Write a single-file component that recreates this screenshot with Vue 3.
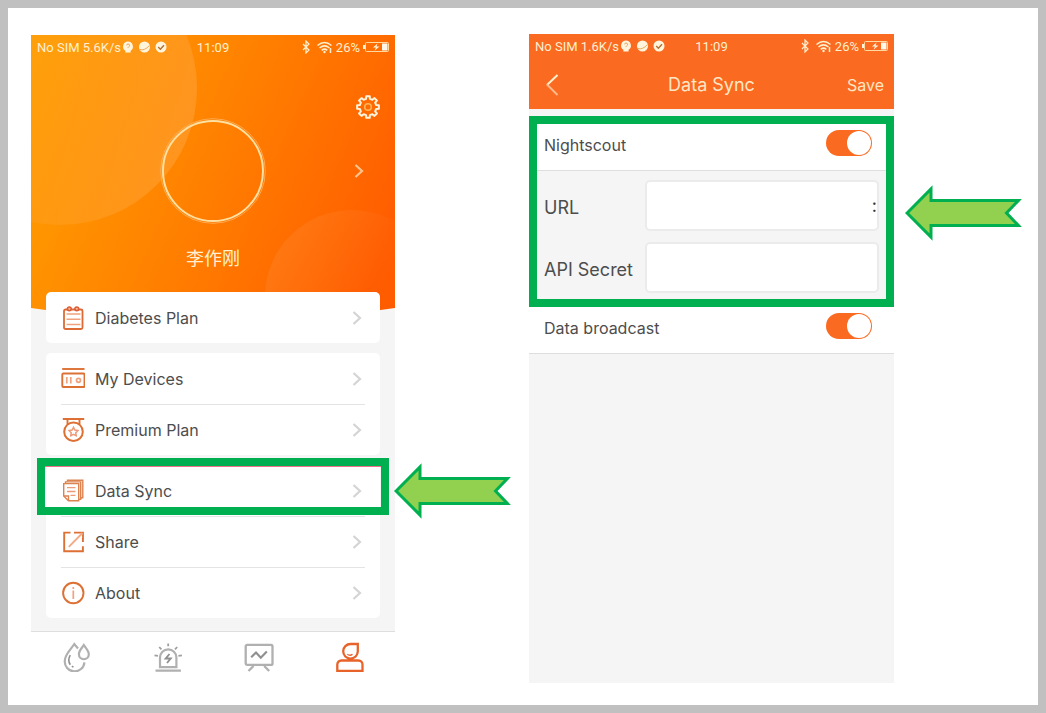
<script setup>
import { ref } from 'vue'

const nightscout = ref(true)
const broadcast = ref(true)
const url = ref(':')
const secret = ref('')

const groups = [
  [{ label: 'Diabetes Plan', icon: 'plan' }],
  [
    { label: 'My Devices', icon: 'devices' },
    { label: 'Premium Plan', icon: 'premium' },
  ],
  [
    { label: 'Data Sync', icon: 'sync', marked: true },
    { label: 'Share', icon: 'share' },
    { label: 'About', icon: 'about' },
  ],
]

const tabs = [
  { label: 'Glucose', icon: 'drops' },
  { label: 'Alarms', icon: 'alarm' },
  { label: 'Trends', icon: 'trend' },
  { label: 'Profile', icon: 'person', active: true },
]

const statuses = { profile: '5.6K/s', sync: '1.6K/s' }

function gearPath(teeth, outer, inner) {
  const step = (Math.PI * 2) / teeth
  const shape = [[-0.2, outer], [0.2, outer], [0.3, inner], [0.7, inner]]
  const points = []
  for (let i = 0; i < teeth; i++) {
    for (const [offset, radius] of shape) {
      const a = (i + offset) * step - Math.PI / 2
      points.push(`${(13 + radius * Math.cos(a)).toFixed(2)} ${(13 + radius * Math.sin(a)).toFixed(2)}`)
    }
  }
  return `M${points.join('L')}Z`
}
const gear = gearPath(8, 11, 8.4)
</script>

<template>
  <svg class="sprite" aria-hidden="true">
    <symbol id="s-badges" viewBox="0 0 46 12">
      <path d="M6 0.5a5 5 0 0 0-2.6 9.2V11.5h5.2V9.7A5 5 0 0 0 6 .5z" fill="#fff5dc" />
      <path d="M4.6 4.4a1.5 1.5 0 1 1 2 1.5q-.6.3-.6 1.2" fill="none" stroke="#e9a45c" />
      <circle cx="22.500" cy="6" r="5.500" fill="#fff5dc" />
      <path d="M18 8.500q4.500 1.500 9.500-4" fill="none" stroke="#f0a860" />
      <circle cx="39" cy="6" r="5.500" fill="#fff5dc" />
      <path d="M36.200 6l2.200 2.200 3.600-4" fill="none" stroke="#b56e35" stroke-width="1.400" />
    </symbol>
    <symbol id="s-signal" viewBox="0 0 32 14">
      <path d="M2 4l6 6-3 3V1l3 3-6 6" fill="none" stroke="#fff0cf" stroke-width="1.200" />
      <g fill="none" stroke="#fff0cf" stroke-width="1.500">
        <path d="M16.500 5.500q7-6 14 0M18.500 8q5-4.200 10 0M20.700 10.300q2.800-2.300 5.600 0" />
        <path d="M29.500 8v5" />
      </g>
      <circle cx="23.500" cy="12" r="1.200" fill="#fff0cf" />
    </symbol>
    <symbol id="s-battery" viewBox="0 0 26 12">
      <rect x="2.500" y="1.500" width="23" height="9" rx="1" fill="none" stroke="#ffd9a0" />
      <path d="M0 4h2v4H0z" fill="#fff5dc" />
      <path d="M19 2.500h5.500v7H19z" fill="#fff8e8" />
      <path d="M14.500 2.500L10 6.500h3l-1.500 3.200 5-4.200h-3z" fill="#fff5dc" />
    </symbol>

    <symbol id="i-plan" viewBox="0 0 24 24">
      <rect x="3" y="3.500" width="18.500" height="19.500" rx="1.500" fill="none" stroke="#dd6a35" stroke-width="1.800" />
      <path d="M5.500 8h14M5.500 13.200h14M5.500 18.600h14" stroke="#f0a27e" stroke-width="1.500" />
      <g fill="#f7b79a" stroke="#dd5a35" stroke-width="1.500">
        <circle cx="8.300" cy="2.800" r="1.900" /><circle cx="15.800" cy="2.800" r="1.900" />
      </g>
    </symbol>
    <symbol id="i-devices" viewBox="0 0 24 24">
      <path d="M1.200 2h22.300" stroke="#dd7034" stroke-width="1.900" />
      <rect x="1.300" y="6.500" width="22.200" height="13.500" rx="1" fill="none" stroke="#dd7034" stroke-width="1.900" />
      <path d="M5.800 10v6.500M9.800 10v6.500" stroke="#f0a27e" stroke-width="1.700" />
      <circle cx="17.500" cy="13.300" r="2" fill="none" stroke="#f0a27e" stroke-width="1.700" />
    </symbol>
    <symbol id="i-premium" viewBox="0 0 24 24">
      <path d="M1.800 1h21.400M6.500 1v5M18.500 1v5" fill="none" stroke="#dd7034" stroke-width="1.900" />
      <circle cx="12.500" cy="13.700" r="9.300" fill="none" stroke="#dd7034" stroke-width="2" />
      <path d="M12.500 9.300l1.400 2.700 3 .5-2.100 2.200.4 3-2.700-1.300-2.700 1.300.4-3-2.100-2.200 3-.5z" fill="none" stroke="#ec9a78" stroke-width="1.500" />
    </symbol>
    <symbol id="i-sync" viewBox="0 0 24 24">
      <g fill="none" stroke="#dc8350" stroke-width="1.400">
        <path d="M6.500 2.500V1.300h15.300v17.500H20" />
        <path d="M4.500 4.500V2.900h15.200v17.500H17.500" />
        <path d="M2.700 4.600h15v17.200H7.500l-4.800-4.800z" />
        <path d="M2.700 17h4.800v4.800" />
      </g>
      <path d="M6 8.700h8.500M6 12.500h8.500M9.500 16.300h5" stroke="#ec9a78" stroke-width="1.300" />
    </symbol>
    <symbol id="i-share" viewBox="0 0 24 24">
      <path d="M9.500 2.600H3.200v18.600h18.700v-5M21.900 12V8" fill="none" stroke="#dd7034" stroke-width="1.900" />
      <path d="M13 2.600h9v5.900" fill="none" stroke="#dd7034" stroke-width="1.800" />
      <path d="M7.800 16.800L21.500 3" stroke="#f3aa86" stroke-width="1.900" />
    </symbol>
    <symbol id="i-about" viewBox="0 0 24 24">
      <circle cx="12.300" cy="12" r="10.200" fill="none" stroke="#dd7034" stroke-width="1.900" />
      <path d="M12.300 9.500v8.500M12.300 6v2" stroke="#f0a27e" stroke-width="1.700" />
    </symbol>

    <symbol id="i-drops" viewBox="0 0 30 30">
      <g fill="none" stroke="currentColor" stroke-width="2.200">
        <path d="M16 6.500L12.300 2C8.500 8 2.800 12.500 2.800 18.800a9.600 9.600 0 0 0 19.600 1.500" />
        <path d="M21.800 3c-2 3.200-4.900 5.800-4.900 9.300a4.900 4.900 0 0 0 9.900 0c0-3.500-3-6.100-5-9.300z" />
      </g>
      <path d="M8.300 13.200c-2 3.200-2 6.500 0 9.600M9.800 24.300l1.700.8" fill="none" stroke="#909090" stroke-width="1.600" />
    </symbol>
    <symbol id="i-alarm" viewBox="0 0 30 30">
      <path d="M7 25.200V15.500a8.200 8.200 0 0 1 16.400 0v9.700zM2.500 28.700h25.400" fill="none" stroke="currentColor" stroke-width="2.200" />
      <path d="M15.200 1.500v2.800M6.200 5l2.200 2.400M24.200 5L22 7.400M1.500 13.300l3.500.6M28.900 13.300l-3.500.6" stroke="#a0a0a0" stroke-width="1.800" />
      <path d="M16.500 12l-3.800 4.500h5L14 21" fill="none" stroke="#909090" stroke-width="1.900" />
    </symbol>
    <symbol id="i-trend" viewBox="0 0 30 30">
      <rect x="1.700" y="2.900" width="26.800" height="20" rx="1.500" fill="none" stroke="currentColor" stroke-width="2.300" />
      <path d="M9.500 24l-5 5M20.200 24l5 5" stroke="currentColor" stroke-width="2.300" />
      <path d="M7.200 15.300l4.800-4.800 4.800 5.200 6-6.200" fill="none" stroke="#909090" stroke-width="2.200" />
    </symbol>
    <symbol id="i-person" viewBox="0 0 30 30">
      <path d="M22.800 2H15.500a7.300 7.300 0 1 0 7.300 7.300zM2.300 28.800V22.500a4 4 0 0 1 4-4h17.200a4 4 0 0 1 4 4v6.300z" fill="none" stroke="currentColor" stroke-width="2.300" />
      <path d="M12.300 12.300q2.700 2 5.200 0" fill="none" stroke="currentColor" stroke-width="1.400" />
    </symbol>
    <symbol id="i-chevron" viewBox="0 0 10 14">
      <path d="M1.500 1L8 7l-6.500 6" fill="none" stroke="currentColor" stroke-width="2.200" />
    </symbol>
    <symbol id="i-arrow" viewBox="0 0 118 56">
      <path d="M3.100 28L27 4V15.500H114.400L102.500 28 114.400 40.500H27V52Z" fill="#92d050" stroke="#00b050" stroke-width="3" stroke-miterlimit="8" />
    </symbol>
  </svg>

  <main class="board">
    <section class="screen profile">
      <header class="hero">
        <svg class="hero-art" viewBox="0 0 364 280" preserveAspectRatio="none" aria-hidden="true">
          <defs>
            <linearGradient id="sun" x1="0" y1="40" x2="364" y2="200" gradientUnits="userSpaceOnUse">
              <stop offset="0" stop-color="#ffa000" />
              <stop offset="0.500" stop-color="#ff8000" />
              <stop offset="1" stop-color="#ff5c00" />
            </linearGradient>
            <linearGradient id="glow" x1="0.300" y1="0.300" x2="1" y2="0.500">
              <stop offset="0" stop-color="#ff9f10" stop-opacity="0.500" />
              <stop offset="1" stop-color="#ff9824" stop-opacity="0.850" />
            </linearGradient>
            <linearGradient id="ember" x1="0" y1="0" x2="1" y2="0.600">
              <stop offset="0" stop-color="#ff8a30" stop-opacity="0.500" />
              <stop offset="0.700" stop-color="#ff7a28" stop-opacity="0" />
            </linearGradient>
            <clipPath id="sky"><path d="M0 0H364V273Q182 300 0 273Z" /></clipPath>
          </defs>
          <g clip-path="url(#sky)">
            <path d="M0 0H364V280H0Z" fill="url(#sun)" />
            <circle cx="29" cy="53" r="137" fill="url(#glow)" />
            <circle cx="321" cy="262" r="87" fill="url(#ember)" />
          </g>
        </svg>
        <div class="status">
          <span class="carrier">No SIM {{ statuses.profile }} <svg class="badges"><use href="#s-badges" /></svg></span>
          <time>11:09</time>
          <span class="power"><svg class="signal"><use href="#s-signal" /></svg>26%<svg class="battery"><use href="#s-battery" /></svg></span>
        </div>
        <div class="tools">
          <button type="button" aria-label="Settings">
            <svg class="gear" viewBox="0 0 26 26">
              <path :d="gear" fill="none" stroke="#fff3dc" stroke-width="2" stroke-linejoin="round" />
              <circle cx="13" cy="13" r="3.300" fill="none" stroke="#ffb55a" stroke-width="1.600" />
            </svg>
          </button>
        </div>
        <div class="identity">
          <svg class="avatar" viewBox="0 0 106 106" aria-hidden="true">
            <circle cx="53" cy="53" r="52.300" fill="none" stroke="#ffb463" stroke-width="0.800" />
            <circle cx="53" cy="53" r="50" fill="none" stroke="#ffe0a0" stroke-width="2" />
          </svg>
          <a href="#account" class="more" aria-label="Account"><svg class="chevron"><use href="#i-chevron" /></svg></a>
        </div>
        <h1 class="name">李作刚</h1>
      </header>

      <nav class="menus">
        <ul v-for="(group, g) in groups" :key="g" class="menu">
          <li v-for="item in group" :key="item.label" :class="{ marked: item.marked }">
            <a href="#menu" class="entry">
              <svg class="glyph"><use :href="'#i-' + item.icon" /></svg>
              <span>{{ item.label }}</span>
              <svg class="chevron"><use href="#i-chevron" /></svg>
            </a>
            <svg v-if="item.marked" class="pointer"><use href="#i-arrow" /></svg>
          </li>
        </ul>
      </nav>

      <nav class="tabs">
        <a v-for="tab in tabs" :key="tab.icon" href="#tab" :aria-label="tab.label" :class="{ active: tab.active }">
          <svg><use :href="'#i-' + tab.icon" /></svg>
        </a>
      </nav>
    </section>

    <section class="screen sync">
      <header class="bar">
        <div class="status">
          <span class="carrier">No SIM {{ statuses.sync }} <svg class="badges"><use href="#s-badges" /></svg></span>
          <time>11:09</time>
          <span class="power"><svg class="signal"><use href="#s-signal" /></svg>26%<svg class="battery"><use href="#s-battery" /></svg></span>
        </div>
        <div class="title">
          <button type="button" class="back" aria-label="Back">
            <svg viewBox="0 0 14 22"><path d="M12.500 1L2 11" stroke="#fff0d0" stroke-width="2" /><path d="M2 10.500L12.500 21" stroke="#ffb98a" stroke-width="2" /></svg>
          </button>
          <h2>Data Sync</h2>
          <button type="button" class="save">Save</button>
        </div>
      </header>

      <form class="settings" @submit.prevent>
        <div class="callout">
          <div class="option">
            <label for="nightscout">Nightscout</label>
            <input id="nightscout" v-model="nightscout" type="checkbox" class="switch" />
          </div>
          <div class="fields">
            <label for="url">URL</label>
            <input id="url" v-model="url" type="text" />
            <label for="secret">API Secret</label>
            <input id="secret" v-model="secret" type="text" />
          </div>
          <svg class="pointer"><use href="#i-arrow" /></svg>
        </div>
        <div class="option">
          <label for="broadcast">Data broadcast</label>
          <input id="broadcast" v-model="broadcast" type="checkbox" class="switch" />
        </div>
      </form>
    </section>
  </main>
</template>

<style>
body {
  background: #fff;
}
</style>

<style scoped>
.board {
  box-sizing: border-box;
  min-height: 100vh;
  border: 8px solid #c0c0c0;
  padding: 26px 144px 22px 23px;
  display: grid;
  grid-template-columns: minmax(0, 364fr) minmax(0, 365fr);
  column-gap: 134px;
  align-items: stretch;
  background: #fff;
  color: #4d4d4d;
  font-family: Inter, Roboto, "Noto Sans CJK SC", sans-serif;
  font-weight: 400;
  font-size: 16px;
}
.sprite {
  position: absolute;
  width: 0;
  height: 0;
}
svg {
  display: block;
  flex: none;
}
button {
  border: 0;
  padding: 0;
  background: none;
  font: inherit;
  color: inherit;
}
a {
  color: inherit;
  text-decoration: none;
}
h1,
h2 {
  margin: 0;
  font-weight: inherit;
}
.screen {
  background: #f5f5f5;
}

.status {
  box-sizing: border-box;
  display: grid;
  grid-template-columns: 1fr auto 1fr;
  align-items: center;
  height: 26px;
  padding: 0 6px 2px;
  font-family: Roboto, sans-serif;
  font-size: 13px;
  color: #fff0cf;
  white-space: nowrap;
}
.carrier,
.power {
  display: flex;
  align-items: center;
}
.carrier {
  gap: 1px;
}
.power {
  justify-content: flex-end;
  gap: 3px;
}
.badges {
  width: 46px;
  height: 12px;
}
.signal {
  width: 32px;
  height: 14px;
}
.battery {
  width: 26px;
  height: 12px;
}

.profile {
  border-top: 1px solid #fff;
}
.hero {
  position: relative;
}
.hero > * {
  position: relative;
}
.hero .hero-art {
  position: absolute;
  top: 0;
  left: 0;
  width: 100%;
  height: 280px;
}
.tools {
  box-sizing: border-box;
  display: flex;
  justify-content: flex-end;
  align-items: flex-start;
  height: 57px;
  padding: 33px 14px 0;
}
.gear {
  width: 26px;
  height: 26px;
}
.identity {
  display: grid;
  grid-template-columns: 1fr auto 1fr;
  align-items: center;
  padding: 0 31px;
}
.avatar {
  grid-column: 2;
  width: 106px;
  height: 106px;
}
.chevron {
  width: 10px;
  height: 14px;
  color: #d4d4d4;
}
.more {
  justify-self: end;
}
.more .chevron {
  color: #ffc48c;
}
.name {
  margin: 21px 0 19px;
  font-size: 18px;
  line-height: 28px;
  text-align: center;
  color: #fff0cf;
}

.menus {
  position: relative;
  display: grid;
  gap: 10px;
  padding: 0 15px 13px;
}
.menu {
  margin: 0;
  padding: 0;
  list-style: none;
  border-radius: 5px;
  background: #fff;
}
.menu li {
  position: relative;
}
.menu li + li::before {
  content: "";
  position: absolute;
  top: 0;
  left: 15px;
  right: 15px;
  border-top: 1px solid #e4e4e4;
}
.entry {
  display: flex;
  align-items: center;
  gap: 10px;
  height: 51px;
  padding: 0 18px 0 15px;
}
.entry span {
  flex: 1;
}
.glyph {
  width: 24px;
  height: 24px;
  overflow: visible;
}
.marked {
  z-index: 1;
}
.marked::after {
  content: "";
  position: absolute;
  top: -7px;
  left: -9px;
  right: -9px;
  bottom: 1px;
  border: 8px solid #00b050;
  box-shadow: inset 0 1px #f0708c;
  pointer-events: none;
}
.pointer {
  position: absolute;
  left: calc(100% + 13px);
  top: -2px;
  width: 118px;
  height: 56px;
}

.tabs {
  display: grid;
  grid-template-columns: repeat(4, 1fr);
  border-top: 1px solid #dedede;
  background: #fff;
  color: #b0b0b0;
}
.tabs a {
  display: flex;
  justify-content: center;
  padding: 10px 0 11px;
}
.tabs .active {
  color: #e8632a;
}
.tabs svg {
  width: 30px;
  height: 30px;
}

.bar {
  background: #fa6a20;
  color: #ffe6c4;
}
.title {
  display: grid;
  grid-template-columns: 1fr auto 1fr;
  align-items: center;
  height: 49px;
  padding: 0 10px;
}
.title h2 {
  font-size: 18px;
}
.back {
  justify-self: start;
  padding-left: 6px;
}
.back svg {
  width: 14px;
  height: 22px;
}
.save {
  justify-self: end;
  font-size: 16px;
}
.settings {
  margin-top: 7px;
}
.callout {
  position: relative;
}
.callout::after {
  content: "";
  position: absolute;
  top: 0;
  left: 0;
  right: 0;
  bottom: -8px;
  border: 8px solid #00b050;
  pointer-events: none;
}
.callout .pointer {
  left: calc(100% + 10px);
  top: 69px;
}
.option {
  box-sizing: border-box;
  display: flex;
  align-items: center;
  justify-content: space-between;
  height: 55px;
  padding: 0 22px 1px 15px;
  border-bottom: 1px solid #dedede;
  background: #fff;
}
.option label {
  padding-top: 5px;
}
.switch {
  appearance: none;
  display: flex;
  justify-content: flex-end;
  box-sizing: border-box;
  width: 46px;
  height: 26px;
  margin: 0;
  padding: 1px;
  border-radius: 13px;
  background: #ccc;
}
.switch::before {
  content: "";
  width: 24px;
  height: 24px;
  border-radius: 50%;
  background: #fff;
}
.switch:checked {
  background: #fa6a20;
}
.switch:not(:checked) {
  justify-content: flex-start;
}
.fields {
  display: grid;
  grid-template-columns: 101px 1fr;
  align-items: center;
  row-gap: 11px;
  padding: 9px 15px 6px;
  font-size: 18px;
}
.fields label {
  padding-top: 3px;
}
.fields input {
  box-sizing: border-box;
  width: 100%;
  height: 51px;
  padding: 0;
  border: 2px solid #ebebeb;
  border-radius: 5px;
  background: #fff;
  font: inherit;
  color: #333;
  text-align: right;
}
</style>
